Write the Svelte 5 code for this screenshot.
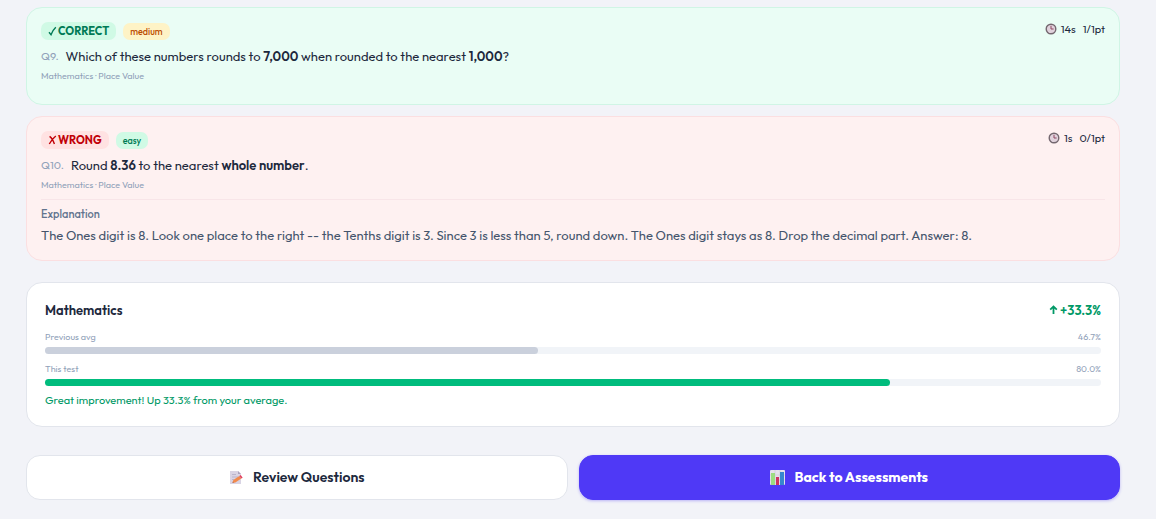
<script>
  const questions = [
    {
      id: 9, correct: true, level: 'medium', time: '14s', points: '1/1pt',
      parts: ['Which of these numbers rounds to ', '7,000', ' when rounded to the nearest ', '1,000', '?'],
      topic: 'Mathematics · Place Value'
    },
    {
      id: 10, correct: false, level: 'easy', time: '1s', points: '0/1pt',
      parts: ['Round ', '8.36', ' to the nearest ', 'whole number', '.'],
      topic: 'Mathematics · Place Value',
      explanation: 'The Ones digit is 8. Look one place to the right -- the Tenths digit is 3. Since 3 is less than 5, round down. The Ones digit stays as 8. Drop the decimal part. Answer: 8.'
    }
  ];
  const scores = [
    { label: 'Previous avg', value: 46.7, kind: 'previous' },
    { label: 'This test', value: 80, kind: 'current' }
  ];
</script>

<main>
  {#each questions as q (q.id)}
    <article class="question" class:wrong={!q.correct}>
      <header>
        <div class="badges">
          <span class="result">
            <svg width="9" height="10" viewBox="0 0 9 10" aria-hidden="true">
              {#if q.correct}
                <path d="M1 6.2 3 8.7Q4.8 4 7.8 1.2" />
              {:else}
                <path d="M1.6 1.4Q4.5 3.5 6.4 9M7.8 1Q4 4 1.3 9" />
              {/if}
            </svg>
            {q.correct ? 'CORRECT' : 'WRONG'}
          </span>
          <span class="level {q.level}">{q.level}</span>
        </div>
        <div class="stats">
          <svg width="12" height="12" viewBox="0 0 12 12" aria-hidden="true">
            <circle cx="6" cy="6" r="4.800" fill="#e0d2dc" stroke="#73676f" stroke-width="1.4" />
            <path d="M6 2.8V6h2.6" fill="none" stroke="#8e4560" stroke-width="1" />
          </svg>
          <span>{q.time}</span>
          <span class="points">{q.points}</span>
        </div>
      </header>
      <p class="prompt">
        <span class="number">Q{q.id}.</span>
        <span>{#each q.parts as part, i}{#if i % 2}<strong>{part}</strong>{:else}{part}{/if}{/each}</span>
      </p>
      <p class="topic">{q.topic}</p>
      {#if q.explanation}
        <section class="explanation">
          <h3>Explanation</h3>
          <p>{q.explanation}</p>
        </section>
      {/if}
    </article>
  {/each}

  <section class="progress">
    <div class="row title">
      <h2>Mathematics</h2>
      <span class="gain">
        <svg width="9" height="10" viewBox="0 0 9 10" aria-hidden="true"><path d="M4.5 9V1.5M1.2 4.6 4.5 1.4 7.8 4.6" /></svg>
        +33.3%
      </span>
    </div>
    {#each scores as s}
      <div class="row label"><span>{s.label}</span><span>{s.value.toFixed(1)}%</span></div>
      <div class="track"><div class="fill {s.kind}" style="width: {s.value}%"></div></div>
    {/each}
    <p class="note">Great improvement! Up 33.3% from your average.</p>
  </section>

  <nav>
    <button type="button">
      <svg width="15" height="15" viewBox="0 0 15 15" aria-hidden="true">
        <path d="M1 1h8l3 3v10H1z" fill="#d9d4e4" />
        <path d="M9 1v3h3z" fill="#aaa3bd" />
        <path d="M3 4.5h4M3 7h6M3 9.5h2" stroke="#b8b1c8" stroke-width=".9" />
        <path d="m3.5 13 .8-3 6-4 2 2.600-6 4z" fill="#f28a4c" />
        <path d="m10.300 6 1.400-.9 2 2.600-1.400.9z" fill="#e2405f" />
        <path d="m3.500 13 .4-1.500 1 1.200z" fill="#a56c5c" />
      </svg>
      Review Questions
    </button>
    <button type="button" class="primary">
      <svg width="15" height="15" viewBox="0 0 15 15" aria-hidden="true">
        <rect width="15" height="15" rx="1" fill="#e4e1ec" />
        <path d="M0 5h15M0 10h15M5 0v15M10 0v15" stroke="#c9c4d8" stroke-width=".6" />
        <rect x="1" y="3" width="4" height="12" fill="#9cdc80" />
        <rect x="6" y="7" width="3" height="8" fill="#ce325f" />
        <rect x="10" y="2" width="4" height="13" fill="#3787cf" />
      </svg>
      Back to Assessments
    </button>
  </nav>
</main>

<style>
  :global(body) { background: #f2f3f8; }
  main {
    padding: 7px 36px 19px 26px;
    font-family: Outfit, Lato, "Open Sans", sans-serif;
    color: #1d293d;
  }
  p, h2, h3 { margin: 0; }
  .question {
    border: 1px solid #d0f5e5;
    border-radius: 16px;
    background: #eafdf5;
    padding: 14px 14px 21px;
    margin-bottom: 11px;
  }
  .question.wrong {
    border-color: #fbdfe1;
    background: #fef1f1;
    padding-bottom: 14px;
    margin-bottom: 21px;
  }
  header, .row { display: flex; justify-content: space-between; }
  .badges { display: flex; align-items: center; gap: 7px; }
  .result, .level {
    display: flex;
    align-items: center;
    border-radius: 7px;
    padding: 0 7px;
  }
  .result {
    gap: 1px;
    background: #d0fae5;
    color: #007a55;
    font-size: 11px;
    font-weight: 700;
    line-height: 18px;
  }
  .wrong .result { background: #ffe2e2; color: #c10007; }
  .result svg, .gain svg { fill: none; stroke: currentColor; stroke-width: 1.4; }
  .level { font-size: 9px; font-weight: 500; line-height: 17px; }
  .medium { background: #fef3c6; color: #bb4d00; }
  .easy { background: #d0fae5; color: #007a55; }
  .stats { display: flex; align-items: center; gap: 4px; height: 14px; font-size: 11px; }
  .points { margin-left: 3px; }
  .prompt {
    display: flex;
    gap: 7px;
    margin-top: 6px;
    font-size: 13px;
    line-height: 20px;
  }
  strong { font-weight: 600; }
  .number { color: #90a1b9; font-size: 11px; }
  .topic { margin-top: 3px; color: #90a1b9; font-size: 9px; line-height: 14px; }
  .explanation { margin-top: 7px; border-top: 1px solid #f8e5e8; padding-top: 7px; }
  h3 { color: #62748e; font-size: 11px; font-weight: 500; line-height: 15px; }
  .explanation p { margin-top: 3px; color: #45556c; font-size: 13px; line-height: 21px; }
  .progress {
    border: 1px solid #e2e5ec;
    border-radius: 16px;
    background: #fff;
    padding: 17px 18px 18px;
  }
  .title { margin-bottom: 10px; line-height: 20px; }
  h2 { font-size: 13px; font-weight: 600; }
  .gain { display: flex; align-items: center; gap: 2px; color: #009966; font-size: 13px; font-weight: 600; }
  .gain svg { stroke-width: 1.8; }
  .label { color: #90a1b9; font-size: 9px; line-height: 14px; margin-bottom: 3px; }
  .track { height: 7px; margin-bottom: 8px; border-radius: 4px; background: #f1f4f8; }
  .fill { height: 100%; border-radius: 4px; }
  .previous { background: #cad0dc; }
  .current { background: #00bc7d; }
  .note { margin-top: -2px; color: #009966; font-size: 11px; line-height: 16px; }
  nav { display: grid; grid-template-columns: 1fr 1fr; gap: 11px; margin-top: 28px; }
  button {
    display: flex;
    align-items: center;
    justify-content: center;
    gap: 9px;
    border: 1px solid #e2e5ec;
    border-radius: 14px;
    background: #fff;
    padding: 11px;
    color: #1d293d;
    font: inherit;
    font-size: 14px;
    font-weight: 600;
    line-height: 21px;
    cursor: pointer;
  }
  .primary {
    border-color: #4f39f6;
    background: #4f39f6;
    color: #fff;
    font-weight: 700;
    box-shadow: 0 1px 3px #4f39f655;
  }
</style>
